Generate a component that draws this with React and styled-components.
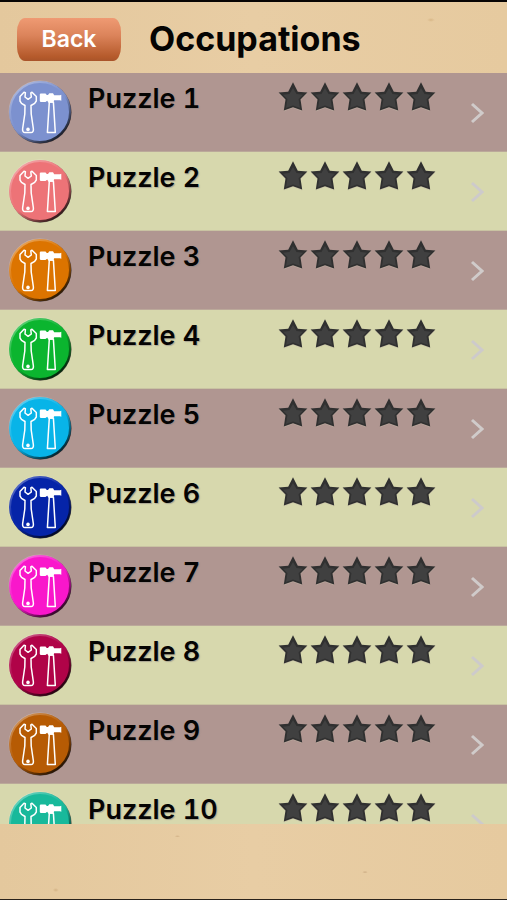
import React from "react";
import styled, { createGlobalStyle } from "styled-components";

const GlobalStyle = createGlobalStyle`
  * { box-sizing: border-box; }
  body { margin: 0; background: #e6cba1; }
`;

const Screen = styled.div`
  display: flex;
  flex-direction: column;
  height: 100vh;
  border-top: 2px solid #080504;
  border-bottom: 1px solid #29221b;
  background:
    radial-gradient(ellipse 3px 1px at 35% 93%, #cfae83, transparent),
    radial-gradient(ellipse 3px 1px at 72% 97%, #c7a67d, transparent),
    radial-gradient(ellipse 3px 2px at 11% 99%, #d3b385, transparent),
    radial-gradient(ellipse 4px 2px at 85% 2%, #d8b787, transparent),
    linear-gradient(90deg, #e4c89d, #e8cda4 50%, #e6ca9f);
  font-family: Inter, "Liberation Sans", sans-serif;
  color: #050403;
`;

const Header = styled.header`
  display: flex;
  align-items: center;
  flex: none;
  gap: 28px;
  height: 71px;
  padding: 3px 17px 0;
`;

const BackButton = styled.button`
  width: 104px;
  height: 43px;
  padding: 0;
  border: 0;
  border-radius: 8px / 14px;
  background: linear-gradient(#ef9a73, #dc845b 40%, #b55a2b 90%, #a9542a);
  color: #fff;
  font: 600 23px/43px Inter, "Liberation Sans", sans-serif;
  cursor: pointer;
`;

const Title = styled.h1`
  margin: 0;
  font-size: 34px;
  line-height: 40px;
  font-weight: 700;
`;

const List = styled.ul`
  flex: 1;
  min-height: 0;
  margin: 0;
  padding: 0;
  overflow-y: auto;
  scrollbar-width: none;
  list-style: none;
`;

const Footer = styled.footer`
  flex: none;
  height: 75px;
`;

const Row = styled.li`
  height: 79px;
  background: ${(p) => (p.$alt ? "#d7d8ad" : "#b09691")};
  border-bottom: 1px solid ${(p) => (p.$alt ? "#c9c3a2" : "#bba99a")};
`;

const RowLink = styled.a`
  display: grid;
  grid-template-columns: 64px minmax(0, 1fr) 158px 48px;
  height: 100%;
  padding: 0 23px 0 8px;
  color: inherit;
  text-decoration: none;
`;

const Badge = styled.svg`
  width: 64px;
  height: 64px;
  margin-top: 7px;
`;

const Name = styled.span`
  padding: 12px 0 0 16px;
  font-size: 27px;
  line-height: 28px;
  font-weight: 600;
  font-variant-numeric: tabular-nums;
  white-space: nowrap;
  text-shadow: 1px 1px 1px #8c838299;
`;

const Stars = styled.span`
  display: flex;
  gap: 2px;
  padding-top: 9px;
`;

const StarSvg = styled.svg`
  flex: none;
  width: 30px;
  height: 30px;
  overflow: visible;
`;

const Chevron = styled.svg`
  justify-self: end;
  width: 14px;
  height: 22px;
  margin-top: 29px;
  stroke: ${(p) => (p.$alt ? "#cdcacb" : "#d0cbca")};
`;

const puzzles = [
  { id: 1, color: "#7c91cf" },
  { id: 2, color: "#ed7377" },
  { id: 3, color: "#dc7400" },
  { id: 4, color: "#0bb52f" },
  { id: 5, color: "#08b4e8" },
  { id: 6, color: "#0524a8" },
  { id: 7, color: "#f917cb" },
  { id: 8, color: "#b00348" },
  { id: 9, color: "#b65b04" },
  { id: 10, color: "#18b99b" },
];

function ToolsBadge({ id, color }) {
  const rim = `rim-${id}`;
  return (
    <Badge viewBox="0 0 64 64" aria-hidden="true">
      <defs>
        <linearGradient id={rim} x1="0.2" y1="0.1" x2="0.8" y2="0.9">
          <stop offset="0" stopColor="#fff" stopOpacity="0.3" />
          <stop offset="0.45" stopColor="#fff" stopOpacity="0" />
          <stop offset="0.6" stopColor="#000" stopOpacity="0.1" />
          <stop offset="1" stopColor="#000" stopOpacity="0.75" />
        </linearGradient>
      </defs>
      <circle cx="32.5" cy="32.5" r="31" fill="#231a20" opacity="0.5" />
      <circle cx="32" cy="32" r="31" fill={color} />
      <circle cx="32" cy="32" r="30.2" fill="none" stroke={`url(#${rim})`} strokeWidth="2.4" />
      <g fill="none" stroke="#fff" strokeWidth="1.5" strokeLinejoin="round">
        <path d="M16 12.2 L12 16.5 L12 21 L13.5 23.3 L17 25.5 L16.8 34 L14.6 49 Q14.4 52.5 17 52.5 H23 Q25.6 52.5 25.4 49 L23.2 34 L23 25.5 L26.7 23.3 L28.3 21 L28.3 16.5 L24 12.2 L22.8 12.8 L23.3 17 L20.1 19.3 L17 17 L17.4 12.8 Z" />
        <path d="M41.3 22 L39.4 52.5 H47.3 L45.4 22 Z" />
      </g>
      <circle cx="20" cy="49.4" r="1.8" fill="#fff" />
      <path d="M32.5 13.5 H37.5 L38.8 15 H40 L41.3 13.3 H45 L46.2 15.3 H52 L53.3 14.8 V20.8 L52 20.3 H46.2 L45 22.8 H40.5 L39.2 20.8 L37.5 22 H32.5 L31.8 21 V14.3 Z" fill="#fff" />
    </Badge>
  );
}

function Star() {
  return (
    <StarSvg viewBox="0 0 30 30" aria-hidden="true">
      <path d="M15 1.5 L19.8 10.8 L29.4 11.6 L22.5 18.2 L24.2 29.4 L15 26 L5.8 29.4 L7.5 18.2 L0.6 11.6 L10.2 10.8 Z" fill="#c5b9aa" opacity="0.5" />
      <path d="M15 0.3 L19.8 9.8 L29.4 10.6 L22.5 17.4 L24.2 28.4 L15 25.2 L5.8 28.4 L7.5 17.4 L0.6 10.6 L10.2 9.8 Z" fill="#303030" />
      <path d="M15 6 L18.5 12 L25 12.8 L20.6 17.2 L22 26 L15 23.5 L8 26 L9.4 17.2 L5 12.8 L11.5 12 Z" fill="#404040" />
    </StarSvg>
  );
}

function PuzzleRow({ puzzle }) {
  const alt = puzzle.id % 2 === 0;
  return (
    <Row $alt={alt}>
      <RowLink href={`#puzzle-${puzzle.id}`}>
        <ToolsBadge id={puzzle.id} color={puzzle.color} />
        <Name>Puzzle {puzzle.id}</Name>
        <Stars>
          {[0, 1, 2, 3, 4].map((n) => (
            <Star key={n} />
          ))}
        </Stars>
        <Chevron $alt={alt} viewBox="0 0 14 22" fill="none" aria-hidden="true">
          <path d="M2 2 L12 11 L2 20" strokeWidth="3" />
        </Chevron>
      </RowLink>
    </Row>
  );
}

export default function App() {
  return (
    <>
      <GlobalStyle />
      <Screen>
        <Header>
          <BackButton type="button">Back</BackButton>
          <Title>Occupations</Title>
        </Header>
        <List>
          {puzzles.map((p) => (
            <PuzzleRow key={p.id} puzzle={p} />
          ))}
        </List>
        <Footer />
      </Screen>
    </>
  );
}
